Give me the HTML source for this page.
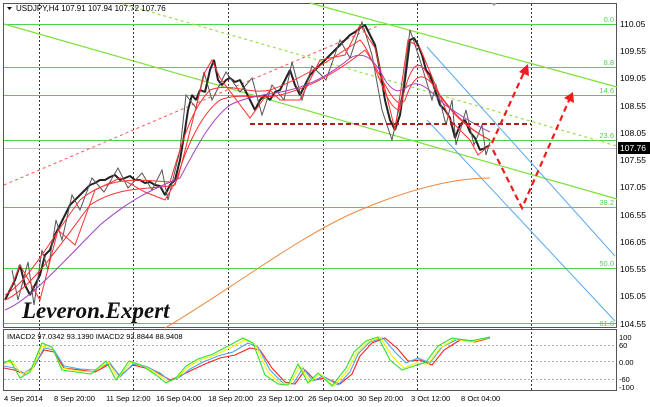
<!DOCTYPE html>
<html><head><meta charset="utf-8"><style>
html,body{margin:0;padding:0;background:#fff;width:650px;height:407px;overflow:hidden}
svg{display:block}
text{font-family:"Liberation Sans",sans-serif;font-size:8.5px;fill:#000}
.d{font-size:7.6px}
</style></head><body>
<svg width="650" height="407" viewBox="0 0 650 407" xmlns="http://www.w3.org/2000/svg">
<rect x="0" y="0" width="650" height="407" fill="#fff"/>
<rect x="3.5" y="3.5" width="613" height="324" fill="none" stroke="#555" stroke-width="1"/>
<rect x="3.5" y="329.5" width="613" height="61" fill="none" stroke="#555" stroke-width="1"/>
<g stroke="#333" stroke-width="1" stroke-dasharray="2,2">
<line x1="39.5" y1="4" x2="39.5" y2="390"/><line x1="133.5" y1="4" x2="133.5" y2="390"/>
<line x1="228.5" y1="4" x2="228.5" y2="390"/><line x1="323.5" y1="4" x2="323.5" y2="390"/>
<line x1="417.5" y1="4" x2="417.5" y2="390"/><line x1="531.5" y1="4" x2="531.5" y2="390"/>
</g>
<g stroke="#aaa" stroke-dasharray="2,2"><line x1="4" y1="345.5" x2="616" y2="345.5"/><line x1="4" y1="361.5" x2="616" y2="361.5"/><line x1="4" y1="379.5" x2="616" y2="379.5"/></g>
<g stroke="#4cd44c" stroke-width="1">
<line x1="4" y1="24.5" x2="616" y2="24.5"/><line x1="4" y1="67.5" x2="616" y2="67.5"/>
<line x1="4" y1="95.5" x2="616" y2="95.5"/><line x1="4" y1="140.5" x2="616" y2="140.5"/>
<line x1="4" y1="207.5" x2="616" y2="207.5"/><line x1="4" y1="268.5" x2="616" y2="268.5"/>
<line x1="4" y1="323.5" x2="616" y2="323.5"/>
</g>
<line x1="4" y1="148.5" x2="616" y2="148.5" stroke="#c8c8c8"/>
<g text-anchor="end">
<text x="614" y="22" style="fill:#5c5;font-size:7.5px">0.0</text><text x="614" y="65" style="fill:#5c5;font-size:7.5px">8.8</text>
<text x="614" y="93" style="fill:#5c5;font-size:7.5px">14.6</text><text x="614" y="138" style="fill:#5c5;font-size:7.5px">23.6</text>
<text x="614" y="205" style="fill:#5c5;font-size:7.5px">38.2</text><text x="614" y="266" style="fill:#5c5;font-size:7.5px">50.0</text>
<text x="614" y="326" style="fill:#5c5;font-size:7.5px">61.8</text>
</g>
<g stroke="#7ee03a" stroke-width="1.2" fill="none">
<line x1="4" y1="24" x2="617" y2="199"/>
<line x1="310" y1="3" x2="617" y2="87"/>
<line x1="123" y1="4" x2="617" y2="146" stroke-dasharray="3,3" stroke="#9be04a"/>
</g>
<line x1="4" y1="185" x2="380" y2="25" stroke="#f55" stroke-dasharray="3,3"/>
<g stroke="#5aa8ee" stroke-width="1"><line x1="427" y1="47" x2="615" y2="256"/><line x1="427" y1="120" x2="615" y2="321"/></g>
<path d="M165,328 C230,290 300,235 360,210 C420,185 460,178 490,178" fill="none" stroke="#f0883c" stroke-width="1"/>
<g stroke="#222" stroke-width="2" fill="none" stroke-linejoin="bevel">
<polyline points="5,300 10,290 15,280 20,265 25,285 30,295 35,285 40,275 45,255 50,250 55,235 60,225 65,215 70,205 75,200 80,195 85,190 90,185 95,183 100,180 105,180 110,177 115,175 120,180 125,178 130,176 135,180 140,180 145,183 150,182 155,185 160,186 165,195 170,185 175,180 180,160 185,130 188,110 192,95 196,100 200,90 205,92 210,70 214,60 218,80 222,85 226,80 230,78 235,82 240,80 245,90 250,100 255,110 260,100 265,95 270,100 275,92 280,90 285,80 290,70 295,85 300,95 305,85 310,75 315,70 320,65 325,60 330,55 335,50 340,45 345,40 350,35 355,32 360,28 365,25 370,35 375,45 380,70 385,100 390,120 395,130 400,115 405,80 410,40 414,38 418,45 422,55 426,70 430,75 435,90 440,105 445,110 450,118 455,138 460,125 465,120 470,132 475,138 480,150 485,148 490,145"/>
</g>
<g stroke="#555" stroke-width="1" fill="none">
<polyline points="12,270 18,300 28,262 34,305 42,250 48,270 56,220 62,240 72,195 80,210 92,178 104,192 118,168 128,188 142,173 152,190 162,170 168,200 180,150 186,95 196,108 204,72 212,100 226,72 240,92 252,78 262,115 272,85 284,100 292,62 302,100 312,66 326,80 340,40 350,58 362,22 372,55 382,110 392,140 402,95 410,30 420,60 432,100 436,85 446,125 452,100 456,145 466,110 474,145 482,125 486,155 490,142"/>
</g>
<g fill="none" stroke="#ff3030" stroke-width="1">
<path d="M5,295 C30,280 50,240 80,200 C110,175 140,180 170,182 C180,150 190,110 210,90 C230,82 250,95 270,90 C300,80 330,60 360,40 C375,55 385,110 400,110 C410,60 420,55 430,80 C445,105 460,125 490,140"/>
<path d="M5,300 C30,290 60,245 90,205 C120,185 150,190 175,185 C185,150 200,115 220,100 C240,92 260,100 280,95 C310,88 340,70 365,50 C380,70 395,115 405,100 C415,70 425,70 440,95 C455,115 470,130 490,140"/>
<polyline points="10,290 20,265 40,300 58,230 75,245 95,190 120,178 145,192 165,200 178,178 205,72 212,60 220,78 250,118 270,90 280,100 300,100 320,60 345,55 360,25 375,48 395,130 408,40 420,48 450,120 470,140 478,155 490,145"/>
</g>
<path d="M5,310 C30,300 60,265 100,225 C130,200 150,190 180,178 C195,150 210,120 230,105 C250,95 270,95 290,90 C310,85 330,75 350,58 C365,50 375,60 385,80 C395,95 400,92 410,85 C420,80 430,90 445,105 C460,115 475,125 490,132" fill="none" stroke="#a040c0" stroke-width="1"/>
<line x1="250" y1="124" x2="531" y2="124" stroke="#b02020" stroke-width="2" stroke-dasharray="5,3"/>
<g stroke="#ee1c1c" stroke-width="2.2" fill="none" stroke-dasharray="6,4">
<line x1="492" y1="143" x2="525" y2="70"/>
<polyline points="493,150 522,208 570,98"/>
</g>
<polygon points="528,64 519,72 529,76" fill="#ee1c1c"/>
<polygon points="573,92 564,98 574,103" fill="#ee1c1c"/>
<g>
<text x="620" y="27">110.05</text><text x="620" y="54">109.55</text><text x="620" y="81">109.05</text>
<text x="620" y="109">108.55</text><text x="620" y="136">108.05</text>
<text x="620" y="163">107.55</text><text x="620" y="190">107.05</text><text x="620" y="218">106.55</text>
<text x="620" y="245">106.05</text><text x="620" y="272">105.55</text><text x="620" y="299">105.05</text><text x="620" y="327">104.55</text>
</g>
<rect x="618" y="142" width="32" height="12" fill="#000"/>
<text x="620" y="151" style="fill:#fff">107.76</text>
<polygon points="7,7 12,7 9.5,10" fill="#000"/>
<text x="16" y="11" style="font-size:8px">USDJPY,H4  107.91 107.94 107.72 107.76</text>
<polygon points="491,3 497,3 494,6" fill="#999"/>
<text x="22" y="318" style="font-family:'Liberation Serif',serif;font-style:italic;font-weight:bold;font-size:23px;fill:#111">Leveron.Expert</text>
<text x="7" y="339" style="font-size:7.5px">IMACD2 97.0342 93.1390  IMACD2 92.8844 88.9408</text>
<g fill="none" stroke-width="1.1">
<polyline stroke="#ff2020" points="4,368 14,370 24,374 34,366 44,350 54,352 64,368 80,370 95,372 110,364 120,376 133,365 145,368 160,374 170,380 180,376 192,370 205,364 220,358 235,355 250,348 260,350 272,368 285,382 295,384 305,370 315,380 325,378 340,384 352,374 360,356 372,343 385,338 397,348 408,361 420,360 432,365 444,350 460,340 475,342 490,338"/>
<polyline stroke="#4ea4ee" points="4,366 14,368 24,373 34,367 44,348 54,350 64,366 80,369 95,370 110,363 120,377 133,364 145,366 160,373 170,381 180,377 190,369 203,362 218,356 233,352 248,343 258,347 270,370 283,383 293,384 303,368 313,381 323,376 338,385 350,372 358,354 370,342 383,338 395,352 406,363 418,358 430,363 442,347 458,339 474,341 490,338"/>
<polyline stroke="#f5f500" points="4,364 12,362 22,374 32,370 42,346 52,348 62,368 78,371 93,372 108,362 118,378 131,362 143,366 158,374 168,382 178,377 188,367 200,360 215,355 230,348 245,340 255,344 268,372 280,383 290,384 300,366 310,382 320,374 334,386 348,370 356,354 368,342 380,337 392,356 404,368 416,363 428,364 440,348 455,339 472,342 490,337"/>
<polyline stroke="#30e030" points="4,363 10,360 20,378 30,372 42,343 52,347 62,370 76,372 91,374 106,361 116,380 129,361 141,365 156,375 166,383 176,378 186,366 198,359 213,354 228,346 243,338 253,343 265,375 278,384 288,385 298,364 308,383 318,373 332,386 346,368 354,352 366,341 378,337 390,360 402,370 414,366 426,362 438,346 452,338 470,341 490,337"/>
</g>
<g><text x="619" y="340" style="font-size:7.5px">100</text><text x="619" y="348" style="font-size:7.5px">60</text>
<text x="619" y="365" style="font-size:7.5px">0.00</text><text x="619" y="382" style="font-size:7.5px">-60</text><text x="619" y="390" style="font-size:7.5px">-100</text></g>
<g>
<text class="d" x="4" y="401">4 Sep 2014</text><text class="d" x="54" y="401">8 Sep 20:00</text><text class="d" x="106" y="401">11 Sep 12:00</text>
<text class="d" x="156" y="401">16 Sep 04:00</text><text class="d" x="208" y="401">18 Sep 20:00</text><text class="d" x="258" y="401">23 Sep 12:00</text>
<text class="d" x="308" y="401">26 Sep 04:00</text><text class="d" x="358" y="401">30 Sep 20:00</text><text class="d" x="411" y="401">3 Oct 12:00</text>
<text class="d" x="461" y="401">8 Oct 04:00</text>
</g>
</svg>
</body></html>
